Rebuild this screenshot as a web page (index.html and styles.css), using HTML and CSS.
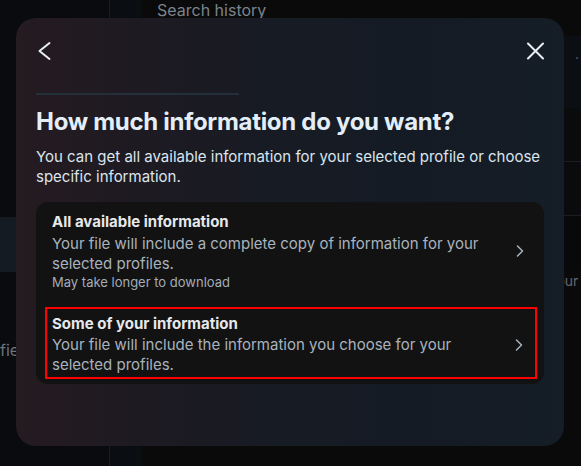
FILE: index.html
```html
<!DOCTYPE html>
<html lang="en">
<head>
<meta charset="utf-8">
<title>Download your information</title>
<link rel="stylesheet" href="styles.css">
</head>
<body>
<div class="page">
  <aside class="side">
    <div class="side-item active"></div>
    <div class="side-item"><span class="side-label">fields</span></div>
  </aside>
  <div class="rail"></div>
  <main class="main">
    <div class="topbar">Search history</div>
    <div class="panel-block"><span class="dot">.</span></div>
    <div class="row"></div>
    <div class="row"></div>
    <div class="row short"></div>
    <div class="note">Your e</div>
  </main>
</div>

<div class="overlay">
  <div class="modal" role="dialog" aria-labelledby="dlg-title">
    <div class="modal-head">
      <button class="icon-btn" aria-label="Back">
        <svg width="24" height="26" viewBox="0 0 24 26"><path d="M13.5 5 L3.5 13 L13.5 21" fill="none" stroke="#e8eef3" stroke-width="2" stroke-linecap="round" stroke-linejoin="round"/></svg>
      </button>
      <button class="icon-btn" aria-label="Close">
        <svg width="24" height="26" viewBox="0 0 24 26"><path d="M8 5.5 L23 20.5 M23 5.5 L8 20.5" fill="none" stroke="#e8eef3" stroke-width="2" stroke-linecap="round"/></svg>
      </button>
    </div>
    <div class="divider"></div>
    <h1 class="title" id="dlg-title">How much information do you want?</h1>
    <p class="subtitle">You can get all available information for your selected profile or choose specific information.</p>
    <div class="card">
      <div class="option first">
        <div class="option-text">
          <div class="option-title">All available information</div>
          <div class="option-desc">Your file will include a complete copy of information for your selected profiles.</div>
          <div class="option-note">May take longer to download</div>
        </div>
        <svg class="chev" width="8" height="12" viewBox="0 0 8 12"><path d="M1.5 1 L6.5 6 L1.5 11" fill="none" stroke="#a9b3bd" stroke-width="1.5" stroke-linecap="round" stroke-linejoin="round"/></svg>
      </div>
      <div class="option highlighted">
        <div class="option-text">
          <div class="option-title">Some of your information</div>
          <div class="option-desc">Your file will include the information you choose for your selected profiles.</div>
        </div>
        <svg class="chev" width="8" height="12" viewBox="0 0 8 12"><path d="M1.5 1 L6.5 6 L1.5 11" fill="none" stroke="#a9b3bd" stroke-width="1.5" stroke-linecap="round" stroke-linejoin="round"/></svg>
      </div>
    </div>
  </div>
</div>
</body>
</html>
```

FILE: styles.css
```css
html, body {
  margin: 0;
  padding: 0;
}

body {
  width: 581px;
  height: 466px;
  overflow: hidden;
  background: #08090b;
  font-family: Inter, "Noto Sans", sans-serif;
}

/* ---------- page behind the dialog ---------- */
.page {
  display: flex;
  height: 466px;
}

.side {
  width: 110px;
  flex: none;
  background: #090b0e;
  border-right: 1px solid #1a1e24;
  display: flex;
  flex-direction: column;
  padding-top: 217px;
  box-sizing: border-box;
  overflow: hidden;
}

.side-item.active {
  height: 55px;
  background: #151b22;
}

.side-label {
  display: block;
  margin-top: 68px;
  color: #6b747d;
  font-size: 16px;
  line-height: 20px;
  white-space: nowrap;
}

.rail {
  width: 32px;
  flex: none;
  background: #0a0d12;
}

.main {
  flex: 1;
  min-width: 0;
  overflow: hidden;
  background: #0a0a0b;
  display: flex;
  flex-direction: column;
}

.topbar {
  height: 20px;
  padding-left: 15px;
  color: #7b848d;
  font-size: 16px;
  line-height: 20px;
  background: #0a0a0a;
}

.panel-block {
  margin-top: 16px;
  height: 72px;
  background: #0b0e12;
  display: flex;
  justify-content: flex-end;
  padding-right: 2px;
  color: #5c646c;
  font-size: 14px;
  line-height: 36px;
}

.row {
  height: 53px;
  border-bottom: 1px solid #1b1f24;
  background: #0a0b0d;
}

.row.short {
  height: 55px;
  border-bottom: 0;
  background: #08090b;
}

.note {
  padding-left: 406px;
  color: #5f6870;
  font-size: 14px;
  line-height: 20px;
  white-space: nowrap;
}

/* ---------- dialog ---------- */
.overlay {
  position: fixed;
  inset: 0;
  padding: 18px 0 0 16px;
}

.modal {
  width: 548px;
  height: 428px;
  box-sizing: border-box;
  border-radius: 20px;
  padding: 20px 20px 0;
  background: linear-gradient(90deg, #251b21 0%, #1e1a22 22%, #171b24 48%, #141b24 75%, #151d26 100%);
  color: #e4edf5;
}

.modal-head {
  height: 26px;
  display: flex;
  justify-content: space-between;
  align-items: center;
}

.icon-btn {
  border: 0;
  padding: 0;
  margin: 0;
  background: none;
  display: flex;
  cursor: pointer;
}

.divider {
  margin-top: 29px;
  width: 203px;
  height: 2px;
  background: #23303a;
}

.title {
  margin: 12px 0 0;
  font-size: 24px;
  line-height: 30px;
  font-weight: 700;
  color: #e3eef8;
  letter-spacing: -0.3px;
}

.subtitle {
  margin: 10px 0 0;
  font-size: 15px;
  line-height: 20px;
  color: #dbe5ee;
}

.card {
  margin-top: 15px;
  height: 182px;
  box-sizing: border-box;
  border-radius: 12px;
  background: #121212;
  padding-top: 10px;
}

.option {
  display: flex;
  align-items: center;
  gap: 12px;
}

.option.first {
  padding: 0 20px 0 16px;
}

.option.first .option-title {
  margin-bottom: 2px;
}

.option.highlighted {
  margin: 17px 7px 0 9px;
  border: 2px solid #ff0000;
  padding: 5px 12px 2px 5px;
}

.option-text {
  flex: 1;
}

.option-title {
  font-size: 15px;
  line-height: 20px;
  font-weight: 700;
  color: #e6e8eb;
  margin-bottom: 1px;
}

.option-desc {
  font-size: 15px;
  line-height: 20px;
  color: #a9b3bd;
}

.option-note {
  font-size: 13px;
  line-height: 16px;
  color: #a3adb7;
}

.chev {
  flex: none;
}
```
